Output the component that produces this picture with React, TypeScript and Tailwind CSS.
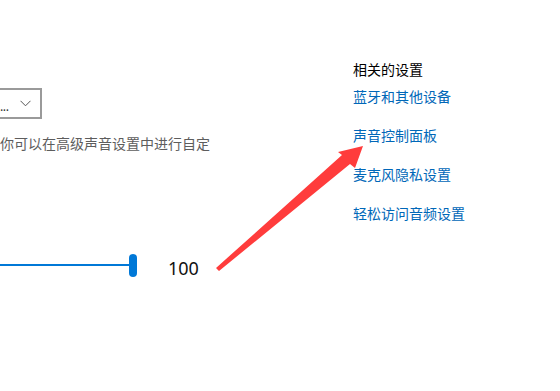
import React from "react";

const cjk = { fontFamily: '"Noto Sans CJK SC", "Noto Sans", sans-serif' };

export default function App() {
  const links = ["蓝牙和其他设备", "声音控制面板", "麦克风隐私设置", "轻松访问音频设置"];
  return (
    <div className="relative w-[560px] h-[391px] bg-white overflow-hidden flex" style={cjk}>
      <div className="w-[353px] shrink-0 flex flex-col">
        <div className="mt-[88px] h-[31px] w-[42px] border-2 border-l-0 border-[#9a9a9a] flex items-center">
          <span className="text-[12px] leading-none text-[#333] pt-[5px] tracking-[-0.5px]">...</span>
          <svg className="ml-[11px]" width="11" height="7" viewBox="0 0 11 7">
            <path d="M0.5 0.8 L5.5 5.8 L10.5 0.8" fill="none" stroke="#555" strokeWidth="1" />
          </svg>
        </div>
        <div className="mt-[14px] h-[20px] leading-[20px] text-[14px] text-[#5d5d5d] whitespace-nowrap">
          你可以在高级声音设置中进行自定
        </div>
        <div className="mt-[100px] h-[24px] flex items-center">
          <div className="w-[130px] h-[2px] bg-[#0078d7]" />
          <div className="w-[8px] h-[23px] rounded-full bg-[#0078d7] -ml-[1px]" />
          <span
            className="ml-[31px] text-[18px] leading-none text-[#111] pt-[5px]"
            style={{ fontFamily: '"Noto Sans", sans-serif' }}
          >
            100
          </span>
        </div>
      </div>
      <div className="flex flex-col pt-[59px] text-[14px] leading-[20px]">
        <div className="text-black">相关的设置</div>
        <div className="mt-[7px] flex flex-col gap-[19px]">
          {links.map((l) => (
            <div key={l} className="text-[#0067b8] whitespace-nowrap">
              {l}
            </div>
          ))}
        </div>
      </div>
      <svg className="absolute left-0 top-0 pointer-events-none" width="560" height="391" viewBox="0 0 560 391">
        <polygon
          points="216,268 342,155 338,152 363,146 355,168 350,164 219,271"
          fill="#ff3c3c"
        />
      </svg>
    </div>
  );
}
